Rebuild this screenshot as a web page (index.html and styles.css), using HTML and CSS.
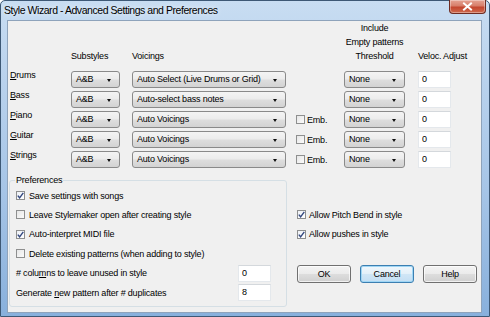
FILE: index.html
```html
<!DOCTYPE html>
<html>
<head>
<meta charset="utf-8">
<title>Style Wizard</title>
<link rel="stylesheet" href="styles.css">
</head>
<body>
<div class="window">
  <div class="titlebar">
    <span class="title">Style Wizard - Advanced Settings and Preferences</span>
    <div class="close"><svg width="11" height="9" viewBox="0 0 11 9"><path d="M2 1.5 L9 7.5 M9 1.5 L2 7.5" stroke="#fff" stroke-width="2" stroke-linecap="square"/></svg></div>
  </div>
  <div class="client">
    <div class="tracks">
      <div class="hd"></div>
      <div class="hd">Substyles</div>
      <div class="hd">Voicings</div>
      <div class="hd"></div>
      <div class="hd hd-center">Include<br>Empty patterns<br>Threshold</div>
      <div class="hd hd-nowrap">Veloc. Adjust</div>

      <div class="lbl"><u>D</u>rums</div>
      <div class="combo sub">A&amp;B<span class="arrow"></span></div>
      <div class="combo voice">Auto Select (Live Drums or Grid)<span class="arrow"></span></div>
      <div></div>
      <div class="combo thr">None<span class="arrow"></span></div>
      <div class="edit">0</div>

      <div class="lbl"><u>B</u>ass</div>
      <div class="combo sub">A&amp;B<span class="arrow"></span></div>
      <div class="combo voice">Auto-select bass notes<span class="arrow"></span></div>
      <div></div>
      <div class="combo thr">None<span class="arrow"></span></div>
      <div class="edit">0</div>

      <div class="lbl"><u>P</u>iano</div>
      <div class="combo sub">A&amp;B<span class="arrow"></span></div>
      <div class="combo voice">Auto Voicings<span class="arrow"></span></div>
      <div class="check emb"><span class="box"></span>Emb.</div>
      <div class="combo thr">None<span class="arrow"></span></div>
      <div class="edit">0</div>

      <div class="lbl"><u>G</u>uitar</div>
      <div class="combo sub">A&amp;B<span class="arrow"></span></div>
      <div class="combo voice">Auto Voicings<span class="arrow"></span></div>
      <div class="check emb"><span class="box"></span>Emb.</div>
      <div class="combo thr">None<span class="arrow"></span></div>
      <div class="edit">0</div>

      <div class="lbl"><u>S</u>trings</div>
      <div class="combo sub">A&amp;B<span class="arrow"></span></div>
      <div class="combo voice">Auto Voicings<span class="arrow"></span></div>
      <div class="check emb"><span class="box"></span>Emb.</div>
      <div class="combo thr">None<span class="arrow"></span></div>
      <div class="edit">0</div>
    </div>

    <div class="lower">
      <fieldset class="prefs">
        <legend>Preferences</legend>
        <div class="check prow"><span class="box checked"><svg width="7" height="7" viewBox="0 0 7 7"><path d="M0.8 3.6 L2.6 5.8 L6.3 0.8" fill="none" stroke="#34487f" stroke-width="1.4"/></svg></span>Save settings with songs</div>
        <div class="check prow"><span class="box"></span>Leave Stylemaker open after creating style</div>
        <div class="check prow"><span class="box checked"><svg width="7" height="7" viewBox="0 0 7 7"><path d="M0.8 3.6 L2.6 5.8 L6.3 0.8" fill="none" stroke="#34487f" stroke-width="1.4"/></svg></span>Auto-interpret MIDI file</div>
        <div class="check prow"><span class="box"></span>Delete existing patterns (when adding to style)</div>
        <div class="frow"><span># colu<u>m</u>ns to leave unused in style</span><span class="edit small">0</span></div>
        <div class="frow"><span>Generate <u>n</u>ew pattern after # duplicates</span><span class="edit small">8</span></div>
      </fieldset>
      <div class="side">
        <div class="check srow"><span class="box checked"><svg width="7" height="7" viewBox="0 0 7 7"><path d="M0.8 3.6 L2.6 5.8 L6.3 0.8" fill="none" stroke="#34487f" stroke-width="1.4"/></svg></span>Allow Pitch Bend in style</div>
        <div class="check srow"><span class="box checked"><svg width="7" height="7" viewBox="0 0 7 7"><path d="M0.8 3.6 L2.6 5.8 L6.3 0.8" fill="none" stroke="#34487f" stroke-width="1.4"/></svg></span>Allow pushes in style</div>
        <div class="buttons">
          <div class="btn">OK</div>
          <div class="btn default">Cancel</div>
          <div class="btn">Help</div>
        </div>
      </div>
    </div>
  </div>
</div>
</body>
</html>
```

FILE: styles.css
```css
* { box-sizing: border-box; }
html, body { margin: 0; padding: 0; background: #fff; }

.window {
  width: 490px;
  height: 317px;
  border: 1px solid #3d5875;
  border-radius: 5px 5px 0 0;
  background: linear-gradient(180deg, #c8ddf2 0%, #bcd4ee 20%, #a6c5e7 60%, #88b0dc 100%);
  display: flex;
  flex-direction: column;
  padding: 0 7px 3px 6px;
  font-family: "Liberation Sans", Arial, sans-serif;
  font-size: 9px;
  letter-spacing: -0.2px;
  color: #000;
}

.titlebar {
  height: 19px;
  display: flex;
  align-items: flex-start;
  justify-content: space-between;
}
.title {
  font-size: 10.5px;
  letter-spacing: -0.45px;
  line-height: 18px;
  margin-left: -3px;
  text-shadow: 0 0 5px rgba(255,255,255,0.9);
}
.close {
  width: 37px;
  height: 14px;
  margin-right: -4px;
  margin-top: -1px;
  border: 1px solid #6e2c22;
  border-top: none;
  border-radius: 0 0 4px 4px;
  background: linear-gradient(180deg, #e6a394 0%, #d77e6a 45%, #c4462f 55%, #cd6a4e 100%);
  box-shadow: inset 0 0 0 1px rgba(255,255,255,0.35);
  display: flex;
  align-items: center;
  justify-content: center;
}

.client {
  flex: 1;
  background: #f0f0f0;
  border: 1px solid #8ea3bb;
  display: flex;
  flex-direction: column;
}

.tracks {
  display: grid;
  grid-template-columns: 61px 61px 164px 48px 74px 33px;
  grid-template-rows: 50px repeat(5, 20px);
  padding-left: 2px;
}
.hd {
  align-self: end;
  line-height: 14px;
  margin-bottom: 8px;
}
.hd-center { width: 61px; text-align: center; }
.hd-nowrap { white-space: nowrap; }

.lbl {
  line-height: 12px;
  margin-top: -2px;
}
u { text-decoration: underline; text-underline-offset: 1px; }

.combo {
  position: relative;
  height: 17px;
  line-height: 15px;
  padding-left: 4px;
  border: 1px solid #8a8a8a;
  border-radius: 3px;
  background: linear-gradient(180deg, #f4f4f4 0%, #ececec 48%, #dedede 52%, #d3d3d3 100%);
  white-space: nowrap;
}
.combo.sub { width: 49px; }
.combo.voice { width: 154px; }
.combo.thr { width: 61px; }
.arrow {
  position: absolute;
  right: 8px;
  top: 7px;
  width: 0;
  height: 0;
  border-left: 2.5px solid transparent;
  border-right: 2.5px solid transparent;
  border-top: 3px solid #111;
}

.edit {
  width: 33px;
  height: 17px;
  line-height: 15px;
  padding-left: 3px;
  background: #fff;
  border: 1px solid #e4e8ec;
  border-top-color: #d4d8dc;
}

.check {
  display: flex;
  align-items: center;
  white-space: nowrap;
}
.box {
  width: 9px;
  height: 9px;
  border: 1px solid #8e8f8f;
  background: linear-gradient(135deg, #e6e6e6 0%, #fbfbfb 100%);
  margin-right: 4px;
  flex: none;
  display: flex;
  align-items: center;
  justify-content: center;
}
.box.checked { background: linear-gradient(135deg, #eef1f6 0%, #ffffff 100%); }
.emb { height: 17px; }
.emb .box { margin-right: 2px; }

.lower {
  display: flex;
  margin-top: 3px;
}
.prefs {
  margin: 0 0 0 1px;
  width: 278px;
  border: 1px solid #d5dfe5;
  border-radius: 3px;
  padding: 0 0 4px 6px;
  min-inline-size: 0;
}
.prefs legend {
  padding: 0 1px;
  margin-left: -1px;
  line-height: 12px;
}
.prow { height: 19.33px; }
.frow {
  height: 19.5px;
  display: grid;
  grid-template-columns: 222px 33px;
  align-items: center;
}
.edit.small { height: 17px; }

.side {
  margin-left: 10px;
  padding-top: 31px;
  display: flex;
  flex-direction: column;
}
.srow { height: 19.5px; }
.srow .box { margin-right: 3px; }

.buttons {
  display: flex;
  gap: 9px;
  margin-top: 21px;
}
.btn {
  width: 54px;
  height: 18px;
  line-height: 16px;
  text-align: center;
  border: 1px solid #707070;
  border-radius: 3px;
  background: linear-gradient(180deg, #f4f4f4 0%, #ebebeb 48%, #dddddd 52%, #d0d0d0 100%);
  box-shadow: inset 0 0 0 1px rgba(255,255,255,0.7);
}
.btn.default {
  border-color: #3c7fb1;
  box-shadow: inset 0 0 0 1px #9fd6f5;
  background: linear-gradient(180deg, #f0f7fc 0%, #e3f0f9 48%, #d0e6f6 52%, #c3def3 100%);
}
```
